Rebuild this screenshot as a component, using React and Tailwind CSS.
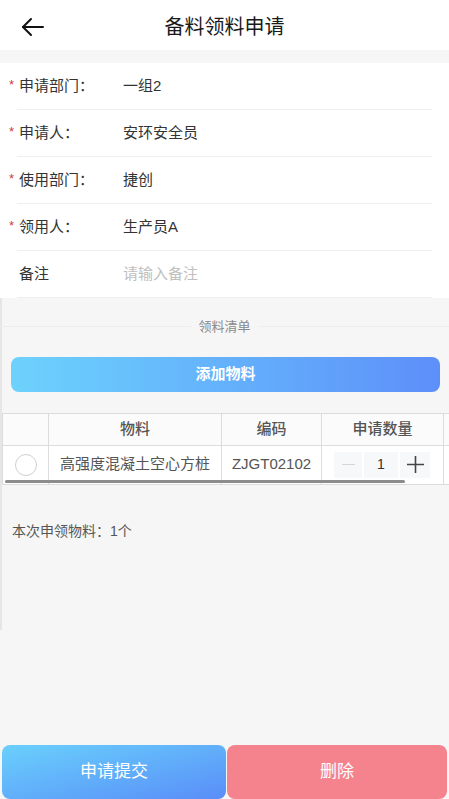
import { useState } from 'react'

const fields = [
  { label: '申请部门：', value: '一组2', required: true },
  { label: '申请人：', value: '安环安全员', required: true },
  { label: '使用部门：', value: '捷创', required: true },
  { label: '领用人：', value: '生产员A', required: true },
  { label: '备注', value: '', placeholder: '请输入备注', required: false },
]

const BackArrow = () => (
  <svg width="24" height="20" viewBox="0 0 24 20" fill="none" stroke="#111" strokeWidth="2" strokeLinecap="round" strokeLinejoin="round">
    <path d="M22 10H2" />
    <path d="M10 2L2 10l8 8" />
  </svg>
)

const App = () => {
  const [qty, setQty] = useState(1)

  return (
    <div className="w-[449px] h-[799px] bg-[#f6f6f6] flex flex-col overflow-hidden font-['Liberation_Sans','Noto_Sans_CJK_SC',sans-serif]">
      {/* ── Header ── */}
      <div className="h-[50px] bg-white flex items-center relative shrink-0 pt-[3px]">
        <button className="ml-[21px]">
          <BackArrow />
        </button>
        <h1 className="absolute left-0 right-0 text-center text-[20px] text-[#1a1a1a] pointer-events-none">
          备料领料申请
        </h1>
      </div>

      {/* ── Form ── */}
      <div className="mt-[13px] bg-white px-[17px] shrink-0">
        {fields.map((f) => (
          <div key={f.label} className="h-[47px] border-b border-[#eeeeee] flex items-center text-[15px]">
            <span className="-ml-[8px] w-[8px] text-[#d23b3b] text-[13px] leading-none -mt-[4px]">
              {f.required ? '*' : ''}
            </span>
            <span className="w-[104px] ml-[2px] text-[#333]">{f.label}</span>
            {f.value ? (
              <span className="text-[#333]">{f.value}</span>
            ) : (
              <span className="text-[#c0c0c0]">{f.placeholder}</span>
            )}
          </div>
        ))}
      </div>

      <div className="border-l-2 border-[#e6e6e6] flex flex-col shrink-0 h-[332px]">
        {/* ── Materials ── */}
        <div className="flex items-center pt-[19px] -ml-[2px]">
          <div className="flex-1 h-px bg-[#ededed]" />
          <span className="px-[8px] text-[13px] text-[#8a8a8a]">领料清单</span>
          <div className="flex-1 h-px bg-[#ededed]" />
        </div>

        <button className="mx-[9px] mt-[20px] h-[35px] rounded-[8px] bg-gradient-to-r from-[#6dd2fc] to-[#5d8ff9] text-white text-[15px] font-bold">
          添加物料
        </button>

        <div className="mt-[21px] relative">
          <div className="flex w-[480px] h-[33px] border-t border-l border-b border-[#dcdcdc] bg-[#fbfbfb] text-[15px] text-[#555] font-medium">
            <div className="w-[46px] border-r border-[#dcdcdc]" />
            <div className="w-[173px] border-r border-[#dcdcdc] flex items-center justify-center">物料</div>
            <div className="w-[100px] border-r border-[#dcdcdc] flex items-center justify-center">编码</div>
            <div className="w-[122px] border-r border-[#dcdcdc] flex items-center justify-center">申请数量</div>
            <div className="flex-1" />
          </div>
          <div className="flex w-[480px] h-[39px] border-l border-b border-[#dcdcdc] bg-white text-[15px] text-[#555]">
            <div className="w-[46px] border-r border-[#dcdcdc] flex items-center justify-center">
              <span className="w-[22px] h-[22px] rounded-full border border-[#cfcfcf]" />
            </div>
            <div className="w-[173px] border-r border-[#dcdcdc] flex items-center justify-center">高强度混凝土空心方桩</div>
            <div className="w-[100px] border-r border-[#dcdcdc] flex items-center justify-center">ZJGT02102</div>
            <div className="w-[122px] border-r border-[#dcdcdc] flex items-center pl-[12px] gap-[2px]">
              <button
                onClick={() => setQty(Math.max(1, qty - 1))}
                className="w-[28px] h-[26px] bg-[#f7f8fa] flex items-center justify-center"
              >
                <span className="w-[13px] h-[1.5px] bg-[#d6d6d6]" />
              </button>
              <div className="w-[34px] h-[26px] bg-[#f7f8fa] flex items-center justify-center text-[14px] text-[#333]">
                {qty}
              </div>
              <button
                onClick={() => setQty(qty + 1)}
                className="w-[30px] h-[26px] bg-[#f7f8fa] flex items-center justify-center"
              >
                <svg width="17" height="17" viewBox="0 0 17 17" stroke="#444" strokeWidth="1.6">
                  <path d="M8.5 0v17M0 8.5h17" />
                </svg>
              </button>
            </div>
            <div className="flex-1" />
          </div>
          {/* scrollbar */}
          <div className="absolute left-[3px] top-[67px] w-[400px] h-[3px] rounded-full bg-[#8c8c8c]" />
        </div>

        <p className="mt-[36px] px-[10px] text-[14px] text-[#555]">本次申领物料：1个</p>
      </div>

      <div className="flex-1" />

      {/* ── Bottom bar ── */}
      <div className="flex gap-[1px] px-[2px] h-[54px] shrink-0">
        <button className="w-[224px] rounded-[8px] bg-gradient-to-br from-[#6ad0fb] to-[#5a8df8] text-white text-[17px]">
          申请提交
        </button>
        <button className="w-[220px] rounded-[8px] bg-[#f4838e] text-white text-[17px]">
          删除
        </button>
      </div>
    </div>
  )
}

export default App
